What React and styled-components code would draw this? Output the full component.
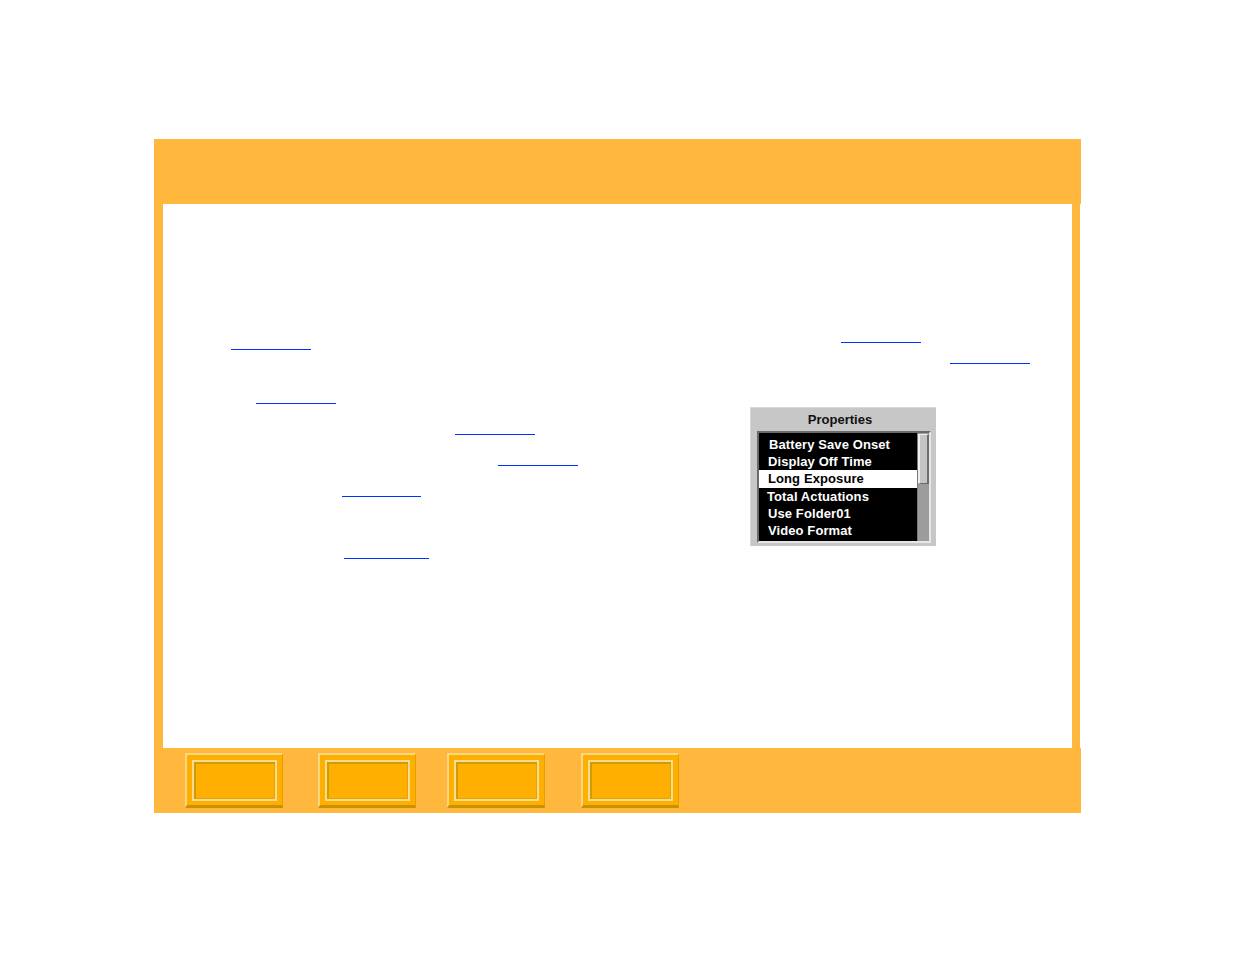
import React from 'react';
import styled, { createGlobalStyle } from 'styled-components';

const orange = '#ffb73d';

const GlobalStyle = createGlobalStyle`
  html, body {
    margin: 0;
    padding: 0;
    background: #fff;
    font-family: "Liberation Sans", Arial, sans-serif;
  }
`;

const Page = styled.div`
  padding: 139px 0 0 154px;
`;

const Frame = styled.div`
  width: 927px;
  display: flex;
  flex-direction: column;
`;

const Header = styled.div`
  height: 65px;
  background: ${orange};
`;

const Middle = styled.div`
  display: flex;
  height: 544px;
`;

const SideStrip = styled.div`
  width: ${props => props.w}px;
  background: ${orange};
`;

const Content = styled.div`
  width: 909px;
  background: #fff;
  display: grid;
  grid-template-columns: 577px 1fr;
`;

const Column = styled.div`
  display: flex;
  flex-direction: column;
  align-items: flex-start;
`;

const Link = styled.a`
  display: block;
  width: ${props => props.w || 80}px;
  height: 13px;
  margin-top: ${props => props.mt}px;
  margin-left: ${props => props.ml}px;
  border-bottom: 1px solid #0033ff;
  color: #0033ff;
  cursor: pointer;
`;

const Panel = styled.div`
  margin-top: 43px;
  margin-left: 10px;
  width: 186px;
  height: 139px;
  box-sizing: border-box;
  background: #c7c7c7;
  border-top: 1px solid #d8d8d8;
  border-left: 1px solid #d8d8d8;
  padding: 0 5px 3px 6px;
  display: flex;
  flex-direction: column;
`;

const PanelTitle = styled.div`
  height: 23px;
  line-height: 23px;
  font-size: 13px;
  font-weight: bold;
  color: #111;
  text-align: center;
  padding-right: 8px;
`;

const ListBox = styled.div`
  flex: 1;
  display: flex;
  border-top: 2px solid #6a6a6a;
  border-left: 2px solid #6a6a6a;
  border-bottom: 2px solid #e6e6e6;
  border-right: 2px solid #e6e6e6;
`;

const List = styled.div`
  flex: 1;
  background: #000;
  padding-top: 3px;
`;

const Item = styled.div`
  height: 17.2px;
  line-height: 17px;
  font-size: 13px;
  font-weight: bold;
  letter-spacing: 0.1px;
  padding-left: ${props => props.indent || 9}px;
  color: ${props => (props.selected ? '#000' : '#fff')};
  background: ${props => (props.selected ? '#fff' : 'transparent')};
  white-space: nowrap;
`;

const ScrollTrack = styled.div`
  width: 11px;
  background: #9c9c9c;
  border-left: 1px solid #7a7a7a;
  padding-top: 1px;
`;

const ScrollThumb = styled.div`
  height: 50px;
  box-sizing: border-box;
  background: #c4c4c4;
  border-left: 2px solid #efefef;
  border-top: 1px solid #efefef;
  border-right: 2px solid #6c6c6c;
  border-bottom: 1px solid #6c6c6c;
`;

const Footer = styled.div`
  height: 65px;
  background: ${orange};
  display: flex;
  align-items: flex-start;
  padding-top: 5px;
  box-sizing: border-box;
`;

const NavButton = styled.div`
  width: 98px;
  height: 55px;
  margin-left: ${props => props.ml}px;
  box-sizing: border-box;
  background: #ffaf00;
  border-top: 2px solid #fad784;
  border-left: 2px solid #fad784;
  border-right: 1px solid #e3a000;
  border-bottom: 3px solid #c99200;
  padding: 5px 5px 4px 5px;
  display: flex;
  align-items: stretch;
  cursor: pointer;
`;

const NavInner = styled.div`
  flex: 1;
  box-sizing: border-box;
  border: 2px solid #f8dc95;
  box-shadow: inset 2px 2px 0 #d29c00, inset -1px -1px 0 #e2a600;
`;

const items = [
  { label: 'Battery Save Onset', indent: 10 },
  { label: 'Display Off Time' },
  { label: 'Long Exposure', selected: true },
  { label: 'Total Actuations', indent: 8 },
  { label: 'Use Folder01' },
  { label: 'Video Format' },
];

const App = () => {
  return (
    <Page>
      <GlobalStyle />
      <Frame>
        <Header />
        <Middle>
          <SideStrip w={9} />
          <Content>
            <Column>
              <Link mt={132} ml={68} />
              <Link mt={40} ml={93} />
              <Link mt={17} ml={292} />
              <Link mt={17} ml={335} />
              <Link mt={17} ml={179} w={79} />
              <Link mt={48} ml={181} w={85} />
            </Column>
            <Column>
              <Link mt={125} ml={101} />
              <Link mt={7} ml={210} />
              <Panel>
                <PanelTitle>Properties</PanelTitle>
                <ListBox>
                  <List>
                    {items.map(item => (
                      <Item
                        key={item.label}
                        selected={item.selected}
                        indent={item.indent}
                      >
                        {item.label}
                      </Item>
                    ))}
                  </List>
                  <ScrollTrack>
                    <ScrollThumb />
                  </ScrollTrack>
                </ListBox>
              </Panel>
            </Column>
          </Content>
          <SideStrip w={8} />
        </Middle>
        <Footer>
          <NavButton ml={31}>
            <NavInner />
          </NavButton>
          <NavButton ml={35}>
            <NavInner />
          </NavButton>
          <NavButton ml={31}>
            <NavInner />
          </NavButton>
          <NavButton ml={36}>
            <NavInner />
          </NavButton>
        </Footer>
      </Frame>
    </Page>
  );
};

export default App;
